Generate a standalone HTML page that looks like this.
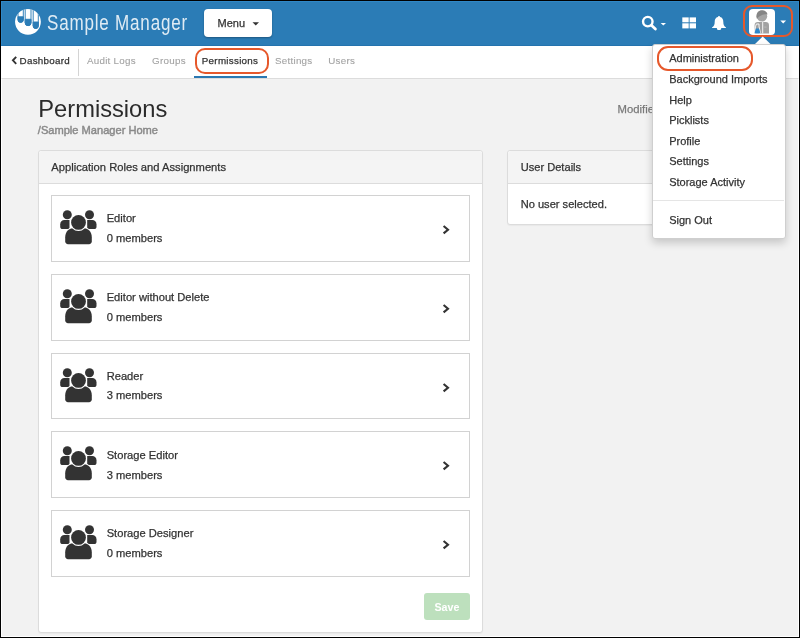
<!DOCTYPE html>
<html><head><meta charset="utf-8">
<style>
*{box-sizing:border-box;margin:0;padding:0}
html,body{width:800px;height:638px;overflow:hidden;background:#f2f2f2;font-family:"Liberation Sans",sans-serif;color:#333}
.a{position:absolute}
.t,.card .n,.card .m,.di{-webkit-text-stroke:0.25px currentColor}
.t{position:absolute;white-space:nowrap;line-height:20px}
#nav{position:absolute;left:0;top:0;width:800px;height:46px;background:#2b7cb6;border-bottom:1px solid #2473ae}
#sub{position:absolute;left:0;top:46px;width:800px;height:33px;background:#fff;border-bottom:1px solid #dcdcdc}
.panel{position:absolute;background:#fff;border:1px solid #dcdcdc;border-radius:3px;box-shadow:0 1px 1px rgba(0,0,0,.04)}
.ph{position:absolute;left:0;top:0;right:0;height:33px;background:#f4f4f4;border-bottom:1px solid #dcdcdc;border-radius:3px 3px 0 0}
.card{position:absolute;left:51.3px;width:418.5px;height:67px;background:#fff;border:1px solid #d2d2d2}
.card svg.ic{position:absolute;left:6.3px;top:13.4px}
.card .n{position:absolute;left:54.4px;top:11.8px;font-size:11.15px;line-height:20px;white-space:nowrap}
.card .m{position:absolute;left:54.4px;top:32px;font-size:11.15px;line-height:20px;white-space:nowrap}
.card svg.ch{position:absolute;left:390px;top:28.7px}
.dd{position:absolute;left:652px;top:43.6px;width:134px;height:195.5px;background:#fff;border:1px solid #cfcfcf;border-radius:3px;box-shadow:0 4px 9px rgba(0,0,0,.18)}
.di{position:absolute;left:16.2px;font-size:11px;line-height:20px;white-space:nowrap;color:#333}
#frame{position:absolute;left:0;top:0;width:800px;height:638px;border:1px solid #000;pointer-events:none}
#frame2{position:absolute;left:1px;top:1px;width:798px;height:636px;border:1px solid #151515;mix-blend-mode:color-dodge;pointer-events:none}
</style></head><body>

<div id="nav">
  <svg class="a" style="left:0;top:0" width="60" height="45" viewBox="0 0 60 45">
    <defs><clipPath id="lc"><circle cx="27.95" cy="21.85" r="12.9"/></clipPath></defs>
    <circle cx="27.95" cy="21.85" r="12.9" fill="#fff"/>
    <g clip-path="url(#lc)" fill="#2b7cb6" stroke="#2b7cb6" stroke-width="0.95">
      <path d="M18 0 V19.7 A2.65 2.65 0 0 0 23.3 19.7 V0" fill="none"/>
      <path d="M18 16.8 V19.7 A2.65 2.65 0 0 0 23.3 19.7 V16.8 Z"/>
      <path d="M25.2 0 V22.75 A2.9 2.9 0 0 0 31 22.75 V0" fill="none"/>
      <path d="M25.2 19.3 V22.75 A2.9 2.9 0 0 0 31 22.75 V19.3 Z"/>
      <path d="M33.2 0 V25.9 A2.55 2.55 0 0 0 38.3 25.9 V0" fill="none"/>
      <path d="M33.2 22 V25.9 A2.55 2.55 0 0 0 38.3 25.9 V22 Z"/>
    </g>
  </svg>
  <div class="t" style="-webkit-text-stroke:0;left:47px;top:12.9px;font-size:21.3px;letter-spacing:1px;color:rgba(255,255,255,.85);transform:scaleX(.8);transform-origin:0 0">Sample Manager</div>

  <div class="a" style="left:204px;top:9px;width:68px;height:28px;background:#fff;border-radius:4px;box-shadow:0 1px 2px rgba(0,0,0,.3)"></div>
  <div class="t" style="left:217.6px;top:13.1px;font-size:11px;color:#333">Menu</div>
  <svg class="a" style="left:252px;top:22px" width="8" height="4" viewBox="0 0 8 4"><path d="M0.5 0.2 H7 L3.75 3.6 Z" fill="#333"/></svg>

  <!-- search -->
  <svg class="a" style="left:640px;top:14px" width="30" height="18" viewBox="0 0 30 18">
    <circle cx="7.8" cy="7.6" r="4.75" fill="none" stroke="#fff" stroke-width="2.4"/>
    <path d="M11.4 11.2 L15.4 15" stroke="#fff" stroke-width="2.8" stroke-linecap="round"/>
    <path d="M20.6 8.9 H26 L23.3 11.6 Z" fill="#fff"/>
  </svg>
  <!-- grid -->
  <svg class="a" style="left:682px;top:16.5px" width="15" height="12" viewBox="0 0 15 12">
    <g fill="#fff"><rect x="0.3" y="0.4" width="6.4" height="4.9"/><rect x="7.6" y="0.4" width="6.4" height="4.9"/><rect x="0.3" y="6.3" width="6.4" height="5.1"/><rect x="7.6" y="6.3" width="6.4" height="5.1"/></g>
  </svg>
  <!-- bell -->
  <svg class="a" style="left:711px;top:15px" width="16" height="16" viewBox="0 0 16 16">
    <path d="M8 1 C8.6 1 9 1.4 9.1 1.9 C11.3 2.4 12.3 4.2 12.3 6.8 C12.3 9.8 13 11.3 15 12.6 V12.9 H10.2 V13.4 C10.2 14.4 9.3 14.9 8 14.9 C6.7 14.9 5.9 14.4 5.9 13.4 V12.9 H1 V12.6 C3 11.3 3.7 9.8 3.7 6.8 C3.7 4.2 4.7 2.4 6.9 1.9 C7 1.4 7.4 1 8 1 Z" fill="#fff"/>
  </svg>
  <!-- avatar -->
  <div class="a" style="left:749px;top:9px;width:26px;height:26px;background:#fff;border-radius:4px"></div>
  <svg class="a" style="left:749px;top:9px" width="26" height="26" viewBox="0 0 26 26">
    <path d="M5.6 24.4 V16.2 C5.6 14.2 6.8 13 8.8 13 H16.8 C18.8 13 20 14.2 20 16.2 V24.4 Z" fill="#a2a2a2"/>
    <path d="M13.7 13 V24.4" stroke="#fff" stroke-width="0.9"/>
    <path d="M15.3 18.1 H17.5" stroke="#c4c4c4" stroke-width="0.7"/>
    <path d="M7.4 15 H10 V17.2 L11.2 23.2 C11.3 24 10.9 24.6 10.2 24.6 H6.6 C5.9 24.6 5.5 24 5.6 23.2 L6.6 17.2 Z" fill="none" stroke="#fff" stroke-width="0.9"/>
    <path d="M7 19.4 H10 L11.1 23.2 C11.2 24 10.8 24.4 10.2 24.4 H6.6 C6 24.4 5.6 24 5.7 23.2 Z" fill="#2d88cc"/>
    <circle cx="12.9" cy="7.3" r="5.3" fill="#a5a5a5"/>
    <path d="M7.6 8.5 C7 4 9.3 1.2 12.9 1.2 C16 1.2 18.3 2.8 18.5 5.6 C17 5 15 5 13.6 5.8 C11.6 6.8 9.6 7.2 8 10 Z" fill="#858585"/>
  </svg>
  <svg class="a" style="left:780px;top:19.5px" width="7" height="4" viewBox="0 0 7 4"><path d="M0.3 0.4 H6.1 L3.2 3.4 Z" fill="#fff"/></svg>
  <div class="a" style="left:743px;top:5px;width:50px;height:32px;border:2px solid #e6582b;border-radius:9px"></div>
</div>

<div id="sub">
  <svg class="a" style="left:11px;top:10px" width="7" height="9" viewBox="0 0 7 9"><path d="M5.2 0.8 L1.9 4.3 L5.2 7.8" fill="none" stroke="#333" stroke-width="1.9"/></svg>
  <div class="t" style="left:19.6px;top:5.3px;font-size:9.8px;letter-spacing:0.28px;color:#333">Dashboard</div>
  <div class="a" style="left:78.3px;top:2.6px;width:1px;height:27.4px;background:#d4d4d4"></div>
  <div class="t" style="left:86.9px;top:5.3px;font-size:9.8px;letter-spacing:0.28px;color:#a3a3a3;-webkit-text-stroke:0.1px #a3a3a3">Audit Logs</div>
  <div class="t" style="left:152.1px;top:5.3px;font-size:9.8px;letter-spacing:0.28px;color:#a3a3a3;-webkit-text-stroke:0.1px #a3a3a3">Groups</div>
  <div class="t" style="left:201.8px;top:5.3px;font-size:9.8px;letter-spacing:0.28px;color:#333">Permissions</div>
  <div class="t" style="left:274.9px;top:5.3px;font-size:9.8px;letter-spacing:0.28px;color:#a3a3a3;-webkit-text-stroke:0.1px #a3a3a3">Settings</div>
  <div class="t" style="left:328.2px;top:5.3px;font-size:9.8px;letter-spacing:0.28px;color:#a3a3a3;-webkit-text-stroke:0.1px #a3a3a3">Users</div>
  <div class="a" style="left:194px;top:30px;width:73px;height:2px;background:#2a78b2"></div>
  <div class="a" style="left:195px;top:2.3px;width:74px;height:25.7px;border:2px solid #e6582b;border-radius:10px"></div>
</div>

<div class="t" style="left:38.3px;top:99.4px;font-size:23.7px;-webkit-text-stroke:0;color:#2b2b2b">Permissions</div>
<div class="t" style="left:37.8px;top:120.1px;font-size:11.1px;-webkit-text-stroke:0.45px #8a8a8a;color:#8a8a8a">/Sample Manager Home</div>
<div class="t" style="left:617.6px;top:99.3px;font-size:11.3px;color:#7a7a7a">Modified</div>

<div class="panel" style="left:38px;top:150.3px;width:445px;height:483px">
  <div class="ph"></div>
  <div class="t" style="left:12.3px;top:5.9px;font-size:11.2px;color:#333">Application Roles and Assignments</div>
  <div class="a" style="left:385px;top:442px;width:46px;height:27px;background:#bde0bd;border-radius:3px"></div>
  <div class="t" style="left:395.4px;top:445.6px;font-size:10.7px;font-weight:bold;-webkit-text-stroke:0;color:#fff">Save</div>
</div>

<div class="panel" style="left:507px;top:150.3px;width:254px;height:75px">
  <div class="ph"></div>
  <div class="t" style="left:12.7px;top:5.6px;font-size:11.1px;color:#333">User Details</div>
  <div class="t" style="left:12.7px;top:43px;font-size:11.1px;color:#333">No user selected.</div>
</div>

<svg width="0" height="0" style="position:absolute">
  <defs>
    <g id="users">
      <circle cx="8.3" cy="5.8" r="4.5" fill="#333"/>
      <circle cx="30.5" cy="5.8" r="4.5" fill="#333"/>
      <path d="M1.2 15.2 C1.2 12.8 3 11 5.4 11 H10.5 V20.1 H3.4 C2.2 20.1 1.2 19.1 1.2 17.9 Z" fill="#333"/>
      <path d="M37.5 15.2 C37.5 12.8 35.7 11 33.3 11 H28.2 V20.1 H35.3 C36.5 20.1 37.5 19.1 37.5 17.9 Z" fill="#333"/>
      <path d="M6.2 28.2 C6.2 22.8 10 19.1 15 19.1 H24 C29 19.1 32.8 22.8 32.8 28.2 V32.2 C32.8 33.8 31.6 35.2 30 35.2 H9 C7.4 35.2 6.2 33.8 6.2 32.2 Z" fill="#333" stroke="#fff" stroke-width="2.4" paint-order="stroke"/>
      <circle cx="19.5" cy="13.4" r="7.4" fill="#333" stroke="#fff" stroke-width="2.4" paint-order="stroke"/>
    </g>
    <path id="chev" d="M1.6 1 L6 4.7 L1.6 8.4" fill="none" stroke="#333" stroke-width="2.1"/>
  </defs>
</svg>

<div class="card" style="top:195px">
  <svg class="ic" width="38" height="36" viewBox="0 0 38 36"><use href="#users"/></svg>
  <div class="n">Editor</div><div class="m">0 members</div>
  <svg class="ch" width="8" height="10" viewBox="0 0 8 10"><use href="#chev"/></svg>
</div>
<div class="card" style="top:274px">
  <svg class="ic" width="38" height="36" viewBox="0 0 38 36"><use href="#users"/></svg>
  <div class="n">Editor without Delete</div><div class="m">0 members</div>
  <svg class="ch" width="8" height="10" viewBox="0 0 8 10"><use href="#chev"/></svg>
</div>
<div class="card" style="top:353px;height:66px">
  <svg class="ic" width="38" height="36" viewBox="0 0 38 36"><use href="#users"/></svg>
  <div class="n">Reader</div><div class="m" style="top:31px">3 members</div>
  <svg class="ch" width="8" height="10" viewBox="0 0 8 10"><use href="#chev"/></svg>
</div>
<div class="card" style="top:431px">
  <svg class="ic" width="38" height="36" viewBox="0 0 38 36"><use href="#users"/></svg>
  <div class="n" style="top:12.6px">Storage Editor</div><div class="m" style="top:32.8px">3 members</div>
  <svg class="ch" width="8" height="10" viewBox="0 0 8 10"><use href="#chev"/></svg>
</div>
<div class="card" style="top:510px">
  <svg class="ic" width="38" height="36" viewBox="0 0 38 36"><use href="#users"/></svg>
  <div class="n">Storage Designer</div><div class="m">0 members</div>
  <svg class="ch" width="8" height="10" viewBox="0 0 8 10"><use href="#chev"/></svg>
</div>

<!-- dropdown -->
<svg class="a" style="left:752px;top:35px" width="22" height="11" viewBox="0 0 22 11">
  <path d="M2 10 L10.75 1.5 L19.5 10 Z" fill="#fff"/>
</svg>
<div class="dd">
  <div class="di" style="top:3.60px">Administration</div>
  <div class="di" style="top:24.25px">Background Imports</div>
  <div class="di" style="top:45.5px">Help</div>
  <div class="di" style="top:65.55px">Picklists</div>
  <div class="di" style="top:86.20px">Profile</div>
  <div class="di" style="top:106.85px">Settings</div>
  <div class="di" style="top:127.50px">Storage Activity</div>
  <div class="a" style="left:0;top:155.2px;width:131px;height:1px;background:#e5e5e5"></div>
  <div class="di" style="top:165.3px">Sign Out</div>
  <div class="a" style="left:3.7px;top:1.2px;width:96.5px;height:25.2px;border:2px solid #e6582b;border-radius:11px"></div>
</div>

<div id="frame2"></div><div id="frame"></div>
</body></html>
